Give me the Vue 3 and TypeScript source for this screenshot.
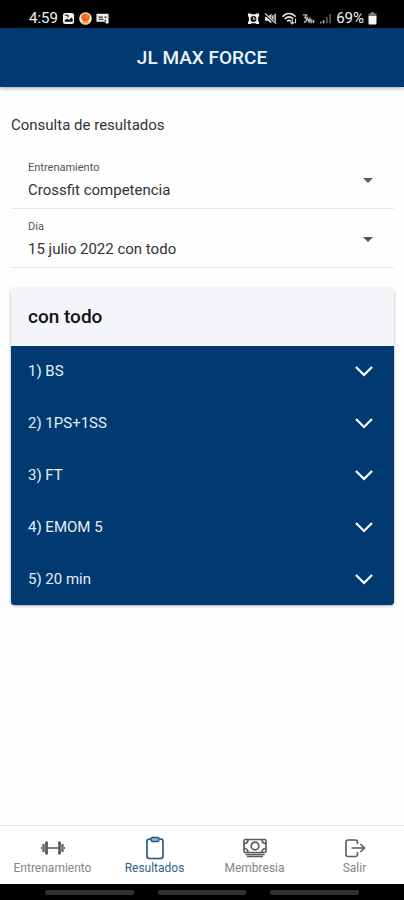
<script setup lang="ts">
import { ref } from 'vue'

interface Exercise {
  id: number
  name: string
}

type TabIcon = 'barbell' | 'clipboard' | 'cash' | 'exit'

interface Tab {
  id: string
  label: string
  icon: TabIcon
}

const training = ref('Crossfit competencia')
const day = ref('15 julio 2022 con todo')
const activeTab = ref('resultados')
const openExercise = ref<number | null>(null)

const exercises: Exercise[] = [
  { id: 1, name: 'BS' },
  { id: 2, name: '1PS+1SS' },
  { id: 3, name: 'FT' },
  { id: 4, name: 'EMOM 5' },
  { id: 5, name: '20 min' },
]

const tabs: Tab[] = [
  { id: 'entrenamiento', label: 'Entrenamiento', icon: 'barbell' },
  { id: 'resultados', label: 'Resultados', icon: 'clipboard' },
  { id: 'membresia', label: 'Membresia', icon: 'cash' },
  { id: 'salir', label: 'Salir', icon: 'exit' },
]

function toggle(id: number): void {
  openExercise.value = openExercise.value === id ? null : id
}
</script>

<template>
  <div class="app">
    <div class="status">
      <div class="status-group">
        <span class="clock">4:59</span>
        <svg class="status-icon" viewBox="0 0 14 14" aria-hidden="true">
          <rect x="1" y="1" width="12" height="12" rx="2.500" fill="#f2f2f2" />
          <path d="M3 3.500h3.500v2.500" fill="none" stroke="#111" stroke-width="1.200" />
          <path d="M3 10.500V9l2.500-2 2 1.500L10 6l1.500 1.500v3z" fill="#111" />
        </svg>
        <svg class="status-icon" viewBox="0 0 14 14" aria-hidden="true">
          <circle cx="7" cy="7" r="6.800" fill="#f6e4d4" />
          <circle cx="7" cy="6" r="4.500" fill="#f0641e" />
          <path d="M3 12c1-3 7-3 8 0z" fill="#e9a13a" />
          <circle cx="8" cy="5" r="1.500" fill="#ff8a3c" />
        </svg>
        <svg class="status-icon" viewBox="0 0 14 14" aria-hidden="true">
          <path d="M0.500 2h13v10.500H11l-2-2H0.500z" fill="#efefef" />
          <path d="M2.500 5.500h5M9 5.500h2.500M3 8h5M10 8v3" stroke="#333" stroke-width="1.200" fill="none" />
        </svg>
      </div>
      <div class="status-group">
        <svg class="status-icon" viewBox="0 0 14 14" aria-hidden="true">
          <path d="M1 1.500h3l1 1h4l1-1h3v3l-1 1v4l1 1.500V13h-3l-1-1H5l-1 1H1v-2l1-1.500v-4l-1-1z" fill="#f2f2f2" />
          <circle cx="7" cy="7.500" r="3.200" fill="#111" />
          <path d="M7 5.500v2.200h2" stroke="#f2f2f2" fill="none" />
        </svg>
        <svg class="status-icon" viewBox="0 0 14 14" aria-hidden="true">
          <path d="M1 5h3l4-3v10L4 9.500H1z" fill="#e6e6e6" />
          <path d="M9.500 3.500v7M12 2v10" stroke="#ddd" stroke-width="1.600" fill="none" />
          <path d="M1 2.500l12 10" stroke="#000" stroke-width="2.400" />
          <path d="M1 1.500l12 11" stroke="#e6e6e6" stroke-width="1.300" />
        </svg>
        <svg class="status-icon wifi" viewBox="0 0 17 14" aria-hidden="true">
          <path d="M1 5c4-4.500 10-4.500 14 0M3.500 7.500c3-3 6-3 9 0M6 10c1.500-1.500 2.500-1.500 4 0" stroke="#e8e8e8" stroke-width="1.700" fill="none" />
          <path d="M11.500 13V8m-2 3l2 2 2-2M15 7v5" stroke="#ddd" stroke-width="1.200" fill="none" />
        </svg>
        <svg class="status-icon" viewBox="0 0 14 14" aria-hidden="true">
          <path d="M1 3h4L3 6c3 0 2.500 5-1 5M5.500 5l1.500 5 2-4M8.500 12V8.500h2V12M12.500 12V8.500" stroke="#bbb" stroke-width="1.400" fill="none" />
        </svg>
        <svg class="status-icon" viewBox="0 0 14 14" aria-hidden="true">
          <path d="M2 12v-1.500M5 12V9" stroke="#bbb" stroke-width="1.700" />
          <path d="M8.500 12V5.500M12 12V2" stroke="#555" stroke-width="1.900" />
        </svg>
        <span>69%</span>
        <svg class="battery" viewBox="0 0 9 13" aria-hidden="true">
          <path d="M3 0h3v1.500h2.500V5h-8V1.500H3z" fill="#777" />
          <path d="M0.500 4h8v7.500q0 1-1 1h-6q-1 0-1-1z" fill="#f5f5f5" />
        </svg>
      </div>
    </div>

    <header class="toolbar">
      <h1>JL MAX FORCE</h1>
    </header>

    <main class="content">
      <h2 class="intro">Consulta de resultados</h2>

      <div class="field">
        <label for="training">Entrenamiento</label>
        <select id="training" v-model="training">
          <option>Crossfit competencia</option>
        </select>
        <span class="caret"></span>
      </div>
      <div class="field">
        <label for="day">Dia</label>
        <select id="day" v-model="day">
          <option>15 julio 2022 con todo</option>
        </select>
        <span class="caret"></span>
      </div>

      <section class="card">
        <h3 class="card-title">con todo</h3>
        <ul class="exercises">
          <li v-for="item in exercises" :key="item.id">
            <button
              type="button"
              class="exercise"
              :aria-expanded="openExercise === item.id"
              @click="toggle(item.id)"
            >
              <span>{{ item.id }}) {{ item.name }}</span>
              <svg class="chevron" :class="{ open: openExercise === item.id }" viewBox="0 0 20 20" aria-hidden="true">
                <path d="M2 6l8 8L18 6" />
              </svg>
            </button>
          </li>
        </ul>
      </section>
    </main>

    <nav class="tabs">
      <a
        v-for="tab in tabs"
        :key="tab.id"
        :href="'#' + tab.id"
        class="tab"
        :class="{ active: activeTab === tab.id }"
        @click="activeTab = tab.id"
      >
        <svg v-if="tab.icon === 'barbell'" class="tab-icon" viewBox="0 0 24 24" aria-hidden="true">
          <path d="M6 12h12" stroke-width="1.600" />
          <path d="M5.500 5.500v13M18.500 5.500v13" stroke-width="2.800" />
          <path d="M2.500 8v8M21.500 8v8" stroke-width="2.200" />
          <path d="M0.500 11v2M23.500 11v2" stroke-width="1" />
        </svg>
        <svg v-else-if="tab.icon === 'clipboard'" class="tab-icon" viewBox="0 0 24 24" aria-hidden="true">
          <path d="M8 3H6.500Q4 3 4 5.500v14.500Q4 22.500 6.500 22.500h11q2.500 0 2.500-2.500v-14.500Q20 3 17.500 3H16" stroke-width="1.600" />
          <rect x="8" y="1.500" width="8" height="4" rx="1.500" fill="#9fb8ca" stroke-width="1.300" />
        </svg>
        <svg v-else-if="tab.icon === 'cash'" class="tab-icon" viewBox="0 0 24 24" aria-hidden="true">
          <rect x="1" y="3.500" width="22" height="13" rx="1.500" stroke-width="1.700" />
          <circle cx="12" cy="10" r="3.800" stroke-width="1.700" />
          <path d="M1 7.500q4 0 4-4M23 7.500q-4 0-4-4M1 12.500q4 0 4 4M23 12.500q-4 0-4 4" stroke-width="1.700" />
          <path d="M2.500 18.500h19M4 20.500h16" stroke-width="1.600" />
        </svg>
        <svg v-else class="tab-icon" viewBox="0 0 24 24" aria-hidden="true">
          <path d="M14.500 8V6q0-2-2-2H5Q3 4 3 6v12.500q0 2 2 2h7.500q2 0 2-2V16" stroke-width="1.600" />
          <path d="M8.500 12H21M17.500 8l4 4-4 4" stroke-width="1.600" />
        </svg>
        <span>{{ tab.label }}</span>
      </a>
    </nav>

    <div class="gesture-bar">
      <span></span><span></span><span></span>
    </div>
  </div>
</template>

<style>
body {
  margin: 0;
  background: #fff;
}
</style>

<style scoped>
.app {
  display: flex;
  flex-direction: column;
  min-height: 100vh;
  background: #fefefe;
  color: #333;
  font-family: Roboto, "Liberation Sans", sans-serif;
}

.status {
  display: flex;
  justify-content: space-between;
  align-items: center;
  height: 28px;
  padding: 8px 27px 0 29px;
  box-sizing: border-box;
  background: #000;
  color: #f2f2f2;
  font-size: 15px;
  line-height: 20px;
}

.status-group {
  display: flex;
  align-items: center;
  gap: 4px;
}

.status-icon {
  width: 13px;
  height: 13px;
}

.wifi {
  width: 17px;
}

.battery {
  width: 9px;
  height: 13px;
}

.toolbar {
  display: flex;
  align-items: center;
  justify-content: center;
  height: 59px;
  background: #003a70;
  box-shadow: 0 1px 4px rgba(0, 20, 50, 0.4);
}

.toolbar h1 {
  margin: 0;
  color: #eef3fa;
  font-size: 19px;
  font-weight: 500;
  line-height: 24px;
}

.content {
  flex: 1;
  padding: 28px 10px 20px 11px;
}

.intro {
  margin: 0 0 15px;
  font-size: 15px;
  font-weight: 400;
  line-height: 20px;
}

.field {
  position: relative;
  display: flex;
  flex-direction: column;
  height: 59px;
  padding: 12px 0 0 17px;
  box-sizing: border-box;
  border-bottom: 1px solid #e6e6e6;
}

.field label {
  color: #555;
  font-size: 11px;
  line-height: 12px;
}

.field select {
  height: 32px;
  margin: 0;
  padding: 0 40px 0 0;
  border: 0;
  background: transparent;
  color: #333;
  font-family: inherit;
  font-size: 15px;
  appearance: none;
}

.caret {
  position: absolute;
  top: 28px;
  right: 21px;
  border: 5px solid transparent;
  border-top-color: #555;
  border-bottom: 0;
  pointer-events: none;
}

.card {
  margin-top: 20px;
  overflow: hidden;
  border-radius: 4px;
  background: linear-gradient(#f4f5f8 50px, #003a70 50px);
  box-shadow: 0 1px 3px rgba(0, 0, 0, 0.35);
}

.card-title {
  margin: 0;
  padding: 16px 17px;
  background: #f4f5f8;
  color: #111;
  font-size: 19px;
  font-weight: 500;
  line-height: 26px;
}

.exercises {
  margin: 0;
  padding: 0;
  background: #003a70;
  list-style: none;
}

.exercise {
  display: flex;
  align-items: center;
  justify-content: space-between;
  width: 100%;
  height: 52px;
  padding: 0 20px 2px 17px;
  border: 0;
  background: transparent;
  color: #e6edf5;
  font-family: inherit;
  font-size: 15px;
  text-align: left;
}

.exercises li:last-child .exercise {
  height: 51px;
}

.chevron {
  width: 20px;
  height: 20px;
  fill: none;
  stroke: #fff;
  stroke-width: 2.200;
}

.chevron.open {
  transform: rotate(180deg);
}

.tabs {
  display: grid;
  grid-template-columns: 105fr 99fr 101fr 99fr;
  height: 59px;
  box-sizing: border-box;
  border-top: 1px solid #e8e8e8;
  background: #fff;
}

.tab {
  display: flex;
  flex-direction: column;
  align-items: center;
  padding-top: 10px;
  color: #858585;
  font-size: 12px;
  line-height: 16px;
  text-decoration: none;
}

.tab.active {
  color: #2f5f85;
}

.tab-icon {
  width: 24px;
  height: 24px;
  fill: none;
  stroke: #5c5c5c;
}

.active .tab-icon {
  stroke: #1d527d;
}

.gesture-bar {
  display: flex;
  justify-content: center;
  gap: 24px;
  padding: 6px 0 5px;
  background: #000;
}

.gesture-bar span {
  width: 22%;
  height: 5px;
  border-radius: 2px;
  background: #303030;
}
</style>
